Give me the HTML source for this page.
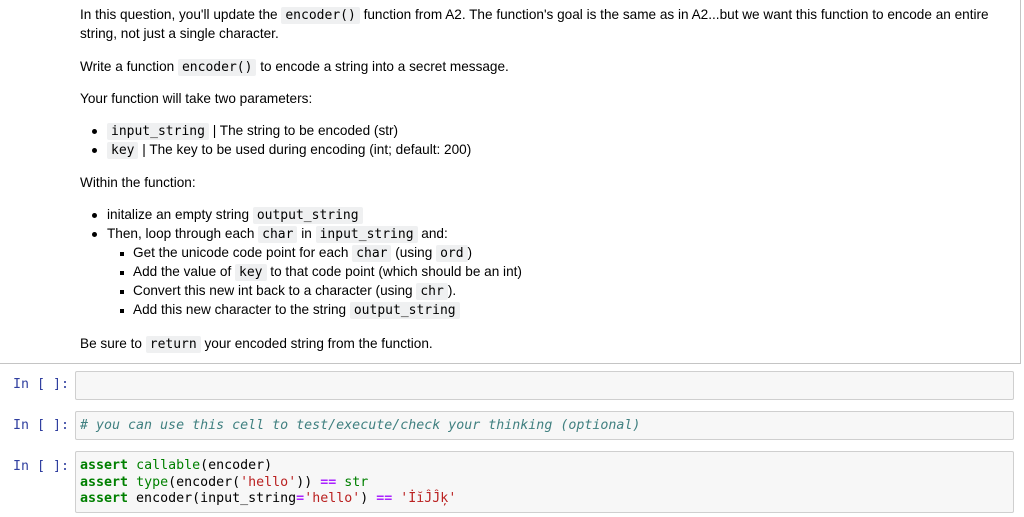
<!DOCTYPE html>
<html><head><meta charset="utf-8"><style>
body{margin:0;width:1024px;height:517px;background:#fff;position:relative;overflow:hidden;font-family:"Liberation Sans",Arial,sans-serif;font-size:13.6px;color:#000}
.l{position:absolute;line-height:19px;white-space:nowrap}
code{font-family:"DejaVu Sans Mono","Liberation Mono",monospace;font-size:13px;background:#eff0f1;padding:1px 4px;border-radius:2px}
.b{position:absolute;width:5px;height:5px;border-radius:50%;background:#000}
.s{position:absolute;width:4px;height:4px;background:#000}
.md{position:absolute;left:-2px;top:-2px;width:1022px;height:365px;border:1px solid #c4c4c4;border-top:none;border-left:none}
.p{position:absolute;left:13px;font-family:"DejaVu Sans Mono","Liberation Mono",monospace;font-size:13.3px;color:#303f9f;line-height:16px}
.c{position:absolute;left:75px;width:939px;background:#f7f7f7;border:1px solid #cfcfcf;border-radius:2px;font-family:"DejaVu Sans Mono","Liberation Mono",monospace;font-size:13.3px;line-height:16.5px;padding:6px 4px 4px;box-sizing:border-box;white-space:pre}
.k{color:#008000;font-weight:bold}.n{color:#008000}.st{color:#ba2121}.o{color:#aa22ff;font-weight:bold}.cm{color:#408080;font-style:italic}
</style></head><body>
<div class="md"></div>
<div class="l" style="left:80px;top:5px">In this question, you'll update the <code>encoder()</code> function from A2. The function's goal is the same as in A2...but we want this function to encode an entire</div>
<div class="l" style="left:80px;top:24px">string, not just a single character.</div>
<div class="l" style="left:80px;top:57px">Write a function <code>encoder()</code> to encode a string into a secret message.</div>
<div class="l" style="left:80px;top:89px">Your function will take two parameters:</div>
<div class="b" style="left:92px;top:129px"></div>
<div class="l" style="left:107px;top:121px"><code>input_string</code> | The string to be encoded (str)</div>
<div class="b" style="left:92px;top:148px"></div>
<div class="l" style="left:107px;top:140px"><code>key</code> | The key to be used during encoding (int; default: 200)</div>
<div class="l" style="left:80px;top:173px">Within the function:</div>
<div class="b" style="left:92px;top:213px"></div>
<div class="l" style="left:107px;top:205px">initalize an empty string <code>output_string</code></div>
<div class="b" style="left:92px;top:232px"></div>
<div class="l" style="left:107px;top:224px">Then, loop through each <code>char</code> in <code>input_string</code> and:</div>
<div class="s" style="left:120px;top:252px"></div>
<div class="l" style="left:133px;top:243px">Get the unicode code point for each <code>char</code> (using <code>ord</code>)</div>
<div class="s" style="left:120px;top:271px"></div>
<div class="l" style="left:133px;top:262px">Add the value of <code>key</code> to that code point (which should be an int)</div>
<div class="s" style="left:120px;top:290px"></div>
<div class="l" style="left:133px;top:281px">Convert this new int back to a character (using <code>chr</code>).</div>
<div class="s" style="left:120px;top:309px"></div>
<div class="l" style="left:133px;top:300px">Add this new character to the string <code>output_string</code></div>
<div class="l" style="left:80px;top:334px">Be sure to <code>return</code> your encoded string from the function.</div>

<div class="p" style="top:377px">In [ ]:</div>
<div class="c" style="top:371px;height:29px"></div>
<div class="p" style="top:418px">In [ ]:</div>
<div class="c" style="top:411px;height:29px"><span class="cm"># you can use this cell to test/execute/check your thinking (optional)</span></div>
<div class="p" style="top:459px">In [ ]:</div>
<div class="c" style="top:451px;height:62px"><span class="k">assert</span> <span class="n">callable</span>(encoder)
<span class="k">assert</span> <span class="n">type</span>(encoder(<span class="st">'hello'</span>)) <span class="o">==</span> <span class="n">str</span>
<span class="k">assert</span> encoder(input_string<span class="o">=</span><span class="st">'hello'</span>) <span class="o">==</span> <span class="st">'İĭĴĴķ'</span></div>
</body></html>
